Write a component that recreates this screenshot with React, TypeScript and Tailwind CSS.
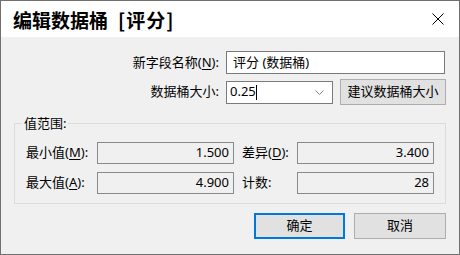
import React from "react";

const font = { fontFamily: '"Noto Sans", "Noto Sans CJK SC", sans-serif' };

function Key({ k }: { k: string }) {
  return (
    <>
      (<span className="underline underline-offset-2">{k}</span>)
    </>
  );
}

function ReadBox({ value }: { value: string }) {
  return (
    <div className="h-[22px] border border-[#8a8a8a] bg-[#f0f0f0] flex items-center justify-end pr-[4px] text-[13px] text-black">
      {value}
    </div>
  );
}

export default function App() {
  return (
    <div
      className="w-[460px] h-[255px] border border-[#707070] bg-[#f0f0f0] flex flex-col text-black text-[13px]"
      style={font}
    >
      {/* title bar */}
      <div className="h-[36px] bg-white flex items-center justify-between pl-[12px] pr-[15px]">
        <span
          className="text-[19px] font-semibold leading-none"
          style={{ fontFamily: '"Noto Sans CJK SC", serif' }}
        >
          编辑数据桶<span className="ml-[10px] tracking-[1px]">[评分]</span>
        </span>
        <svg width="12" height="12" viewBox="0 0 12 12">
          <path d="M0.5 0.5 L11.5 11.5 M11.5 0.5 L0.5 11.5" stroke="#000" strokeWidth="1" fill="none" />
        </svg>
      </div>

      {/* body */}
      <div className="flex flex-col px-[13px]">
        <div className="mt-[14px] flex items-center justify-end pr-[1px] h-[23px]">
          <span className="mr-[7px]">
            新字段名称<Key k="N" />:
          </span>
          <div className="w-[219px] h-[23px] border border-[#7a7a7a] bg-white flex items-center pl-[6px]">
            评分 (数据桶)
          </div>
        </div>

        <div className="mt-[5px] flex items-center justify-end h-[26px]">
          <span className="mr-[7px]">数据桶大小:</span>
          <div className="w-[107px] h-[23px] border border-[#7a7a7a] bg-white flex items-center pl-[3px] pr-[8px]">
            <span>0.25</span>
            <span className="w-px h-[15px] bg-black" />
            <span className="flex-1" />
            <svg width="9" height="5" viewBox="0 0 9 5">
              <path d="M0.5 0.5 L4.5 4.5 L8.5 0.5" stroke="#808080" strokeWidth="1" fill="none" />
            </svg>
          </div>
          <button className="ml-[7px] w-[106px] h-[26px] border border-[#adadad] bg-[#e1e1e1] flex items-center justify-center">
            建议数据桶大小
          </button>
        </div>

        {/* group box */}
        <div className="relative mt-[18px] border border-[#dcdcdc] pl-[11px] pt-[18px] pb-[9px]">
          <span className="absolute -top-[10px] left-[7px] bg-[#f0f0f0] px-[2px]">值范围:</span>
          <div className="grid grid-cols-[71px_137px_63px_137px] gap-y-[8px] items-center">
            <span>
              最小值<Key k="M" />:
            </span>
            <ReadBox value="1.500" />
            <span className="pl-[8px]">
              差异<Key k="D" />:
            </span>
            <ReadBox value="3.400" />
            <span>
              最大值<Key k="A" />:
            </span>
            <ReadBox value="4.900" />
            <span className="pl-[8px]">计数:</span>
            <ReadBox value="28" />
          </div>
        </div>

        <div className="mt-[9px] flex justify-end gap-[9px]">
          <button className="w-[91px] h-[26px] border-2 border-[#0078d7] bg-[#e1e1e1] flex items-center justify-center">
            确定
          </button>
          <button className="w-[92px] h-[26px] border border-[#adadad] bg-[#e1e1e1] flex items-center justify-center">
            取消
          </button>
        </div>
      </div>
    </div>
  );
}
